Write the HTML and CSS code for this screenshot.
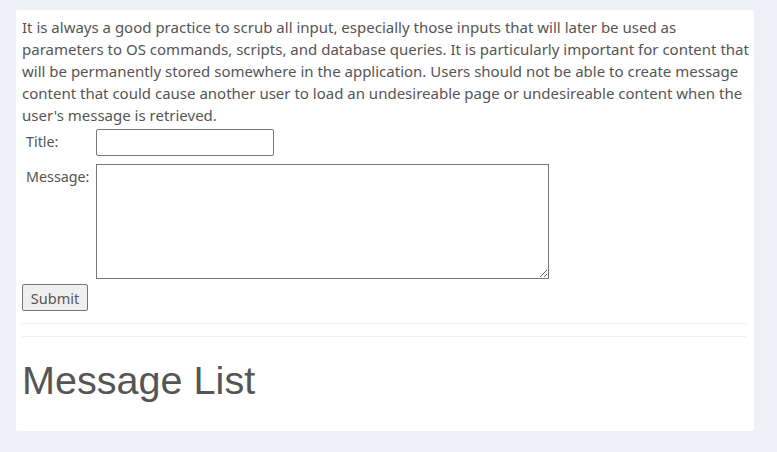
FILE: index.html
```html
<!DOCTYPE html>
<html>
<head>
<meta charset="utf-8">
<link rel="stylesheet" href="styles.css">
</head>
<body>
<div class="card">
  <p class="intro">It is always a good practice to scrub all input, especially those inputs that will later be used as parameters to OS commands, scripts, and database queries. It is particularly important for content that will be permanently stored somewhere in the application. Users should not be able to create message content that could cause another user to load an undesireable page or undesireable content when the user's message is retrieved.</p>
  <form class="form">
    <table class="fields">
      <tr>
        <td class="label">Title:</td>
        <td><input type="text" class="title-input"></td>
      </tr>
      <tr>
        <td class="label">Message:</td>
        <td><textarea class="msg-input"></textarea></td>
      </tr>
    </table>
    <button type="button" class="submit">Submit</button>
  </form>
  <hr class="rule">
  <hr class="rule">
  <h1 class="heading">Message List</h1>
</div>
</body>
</html>
```
FILE: styles.css
```css
html, body {
  margin: 0;
  padding: 0;
  background: #eff0f5;
}
body {
  padding: 10px 23px 21px 16px;
  font-family: "Noto Sans", "Open Sans", sans-serif;
  color: #555;
}
.card {
  background: #fff;
  border-radius: 3px;
  padding: 6px 4px 29px 6px;
}
.intro {
  margin: 0;
  font-size: 15px;
  line-height: 22px;
  text-align: left;
}
.form {
  margin: 0;
}
.fields {
  border-collapse: separate;
  border-spacing: 2px;
  margin-left: 0;
}
.label {
  font-size: 14.3px;
  padding: 4px 4px 1px 2px;
  width: 62px;
  vertical-align: top;
  color: #555;
}
.fields tr + tr .label {
  padding-top: 8px;
}
.title-input {
  width: 172px;
  height: 21px;
  border: 1px solid #767676;
  border-radius: 2px;
  padding: 2px;
  margin: 0;
  display: block;
}
.msg-input {
  width: 447px;
  height: 109px;
  border: 1px solid #767676;
  padding: 2px;
  margin: 4px 0 0 0;
  display: block;
  resize: both;
}
.submit {
  font-family: "Noto Sans", "Open Sans", sans-serif;
  font-size: 14.5px;
  color: #555;
  background: #efefef;
  border: 1px solid #767676;
  border-radius: 2px;
  height: 27px;
  width: 66px;
  padding: 0;
  margin-top: 2px;
}
.rule {
  border: 0;
  border-top: 1px solid #eee;
  margin: 12px 4px 0 0;
}
.heading {
  font-family: "Liberation Sans", Arial, sans-serif;
  font-weight: normal;
  font-size: 39.6px;
  line-height: 44px;
  margin: 21px 0 0 0;
  color: #555;
}
```
